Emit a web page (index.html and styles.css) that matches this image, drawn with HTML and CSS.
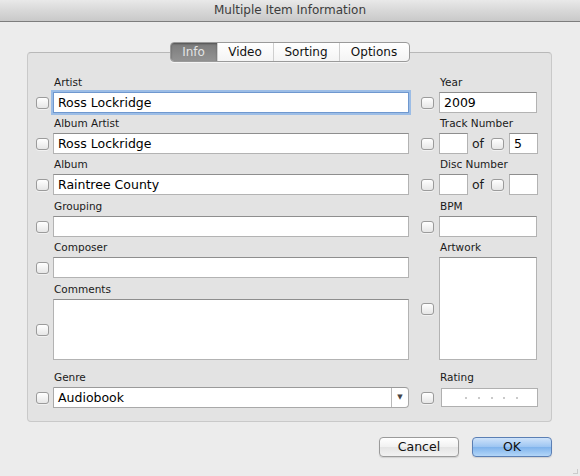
FILE: index.html
```html
<!DOCTYPE html>
<html>
<head>
<meta charset="utf-8">
<link rel="stylesheet" href="styles.css">
</head>
<body>
<div class="window">
  <div class="titlebar">Multiple Item Information</div>
  <div class="main">
    <div class="box">
      <div class="tabs">
        <div class="seg">
          <span class="tab tab-info sel">Info</span>
          <span class="tab tab-video">Video</span>
          <span class="tab tab-sorting">Sorting</span>
          <span class="tab tab-options">Options</span>
        </div>
      </div>
      <div class="cols">
        <div class="col left">
          <div class="group">
            <div class="lbl">Artist</div>
            <div class="row"><span class="cb"></span><div class="field wide focus">Ross Lockridge</div></div>
          </div>
          <div class="group">
            <div class="lbl">Album Artist</div>
            <div class="row"><span class="cb"></span><div class="field wide">Ross Lockridge</div></div>
          </div>
          <div class="group">
            <div class="lbl">Album</div>
            <div class="row"><span class="cb"></span><div class="field wide">Raintree County</div></div>
          </div>
          <div class="group g4">
            <div class="lbl">Grouping</div>
            <div class="row"><span class="cb"></span><div class="field wide"></div></div>
          </div>
          <div class="group">
            <div class="lbl">Composer</div>
            <div class="row"><span class="cb"></span><div class="field wide"></div></div>
          </div>
          <div class="group g6">
            <div class="lbl">Comments</div>
            <div class="row tall"><span class="cb"></span><div class="field wide area"></div></div>
          </div>
          <div class="group g7">
            <div class="lbl">Genre</div>
            <div class="row"><span class="cb"></span>
              <div class="field wide select"><span class="sel-text">Audiobook</span><span class="arrow">▼</span></div>
            </div>
          </div>
        </div>
        <div class="col right">
          <div class="group">
            <div class="lbl">Year</div>
            <div class="row"><span class="cb"></span><div class="field narrow">2009</div></div>
          </div>
          <div class="group">
            <div class="lbl">Track Number</div>
            <div class="row"><span class="cb"></span><div class="field tiny"></div><span class="of">of</span><span class="cb cb2"></span><div class="field tiny">5</div></div>
          </div>
          <div class="group">
            <div class="lbl">Disc Number</div>
            <div class="row"><span class="cb"></span><div class="field tiny"></div><span class="of">of</span><span class="cb cb2"></span><div class="field tiny"></div></div>
          </div>
          <div class="group g4">
            <div class="lbl">BPM</div>
            <div class="row"><span class="cb"></span><div class="field narrow"></div></div>
          </div>
          <div class="group">
            <div class="lbl">Artwork</div>
            <div class="row art"><span class="cb"></span><div class="field narrow artwork"></div></div>
          </div>
          <div class="group g7">
            <div class="lbl">Rating</div>
            <div class="row"><span class="cb"></span>
              <div class="field narrow rating"><span class="dot"></span><span class="dot"></span><span class="dot"></span><span class="dot"></span><span class="dot"></span></div>
            </div>
          </div>
        </div>
      </div>
    </div>
    <div class="buttons">
      <div class="btn">Cancel</div>
      <div class="btn ok">OK</div>
    </div>
  </div>
  <span class="grip"></span>
</div>
</body>
</html>
```

FILE: styles.css
```css
html, body {
  margin: 0;
  padding: 0;
}
body {
  font-family: "DejaVu Sans", "Liberation Sans", sans-serif;
  color: #1a1a1a;
}
.window {
  width: 580px;
  height: 476px;
  background: #ececec;
  overflow: hidden;
  position: relative;
}
.titlebar {
  height: 21px;
  line-height: 21px;
  border-bottom: 1px solid #7d7d7d;
  background: linear-gradient(#e9e9e9, #d8d8d8 50%, #c9c9c9);
  text-align: center;
  font-size: 12px;
  color: #3c3c3c;
}
.main {
  padding: 30px 28px 0 27px;
}
.box {
  position: relative;
  box-sizing: border-box;
  width: 525px;
  height: 370px;
  background: #e3e3e3;
  border: 1px solid #c9c9c9;
  border-top-color: #b8b8b8;
  border-radius: 4px;
  padding: 22px 0 0 8px;
}
.tabs {
  position: absolute;
  top: -11px;
  left: 0;
  right: 0;
  display: flex;
  justify-content: center;
}
.seg {
  display: flex;
  height: 20px;
  box-sizing: border-box;
  border: 1px solid #9a9a9a;
  border-radius: 4px;
  background: linear-gradient(#ffffff, #f4f4f4);
  overflow: hidden;
  box-shadow: 0 1px 0 rgba(255,255,255,0.6);
}
.tab {
  font-size: 12px;
  line-height: 18px;
  text-align: center;
  color: #111;
  border-left: 1px solid #cfcfcf;
}
.tab:first-child { border-left: none; }
.tab-info { width: 46px; }
.tab-video { width: 55px; }
.tab-sorting { width: 65px; }
.tab-options { width: 69px; }
.tab.sel {
  background: linear-gradient(#7b7b7b, #939393);
  color: #e4e4e4;
  box-shadow: inset 0 1px 2px rgba(0,0,0,0.35);
}
.cols {
  display: flex;
  gap: 12px;
}
.col {
  display: flex;
  flex-direction: column;
  gap: 3px;
}
.left { width: 373px; }
.right { width: 117px; }
.group {
  display: flex;
  flex-direction: column;
}
.lbl {
  height: 14px;
  line-height: 14px;
  font-size: 10.5px;
  margin-bottom: 3px;
  color: #1a1a1a;
}
.left .lbl { padding-left: 18px; }
.right .lbl { padding-left: 19px; }
.g4 { margin-top: 1px; }
.g6 { margin-top: 1px; }
.g7 { margin-top: 7px; }
.row {
  display: flex;
  align-items: center;
  height: 21px;
}
.left .row { gap: 4px; }
.right .row { gap: 5px; }
.row.tall { height: 61px; }
.row.art { height: 103px; }
.cb {
  flex: none;
  width: 13px;
  height: 12px;
  box-sizing: border-box;
  border: 1px solid #9b9b9b;
  border-radius: 3px;
  background: linear-gradient(#ffffff, #e6e6e6);
  box-shadow: 0 1px 0 rgba(255,255,255,0.5);
}
.field {
  box-sizing: border-box;
  height: 21px;
  background: #fff;
  border: 1px solid #b3b3b3;
  border-top-color: #8e8e8e;
  font-size: 12.5px;
  line-height: 19px;
  padding-left: 4px;
  color: #000;
  white-space: nowrap;
}
.field.wide { width: 356px; }
.field.narrow { width: 98px; }
.field.tiny { width: 30px; }
.field.focus {
  border-color: #6f98cf;
  box-shadow: 0 0 0 2px #9cbde6;
}
.field.area { height: 61px; }
.field.artwork { height: 103px; }
.of {
  font-size: 12.5px;
  margin: 0 1px 0 -1px;
}
.right .row .cb2 { margin-left: 1px; }
.field.select {
  display: flex;
  align-items: center;
  padding: 0;
  border-radius: 0 4px 4px 0;
  border-color: #a9a9a9;
  border-top-color: #9a9a9a;
}
.sel-text {
  flex: 1;
  padding-left: 4px;
}
.arrow {
  width: 16px;
  height: 19px;
  border-left: 1px solid #b9b9b9;
  font-size: 7px;
  line-height: 19px;
  text-align: center;
  color: #444;
}
.field.rating {
  height: 19px;
  width: 98px;
  margin-left: 2px;
  display: flex;
  align-items: center;
  justify-content: center;
  gap: 10.6px;
  padding-left: 4px;
  border-color: #b0b0b0;
}
.dot {
  width: 2px;
  height: 2px;
  border-radius: 1px;
  background: #b8b8b8;
}
.buttons {
  display: flex;
  justify-content: flex-end;
  gap: 13px;
  margin-top: 15px;
}
.btn {
  box-sizing: border-box;
  width: 80px;
  height: 20px;
  border: 1px solid #9a9a9a;
  border-radius: 4px;
  background: linear-gradient(#ffffff, #f1f1f1 50%, #e4e4e4 51%, #f2f2f2);
  font-size: 12.5px;
  line-height: 18px;
  text-align: center;
  color: #111;
  box-shadow: 0 1px 1px rgba(0,0,0,0.12);
}
.btn.ok {
  border-color: #5b7fb4;
  background: linear-gradient(#cfe3fa, #9cc5f2 50%, #7fb3ec 51%, #b3d6f8);
}
.grip {
  position: absolute;
  right: 2px;
  bottom: 2px;
  width: 4px;
  height: 4px;
  border-right: 1px solid #9a9a9a;
  border-bottom: 1px solid #9a9a9a;
  opacity: 0.4;
}
```
